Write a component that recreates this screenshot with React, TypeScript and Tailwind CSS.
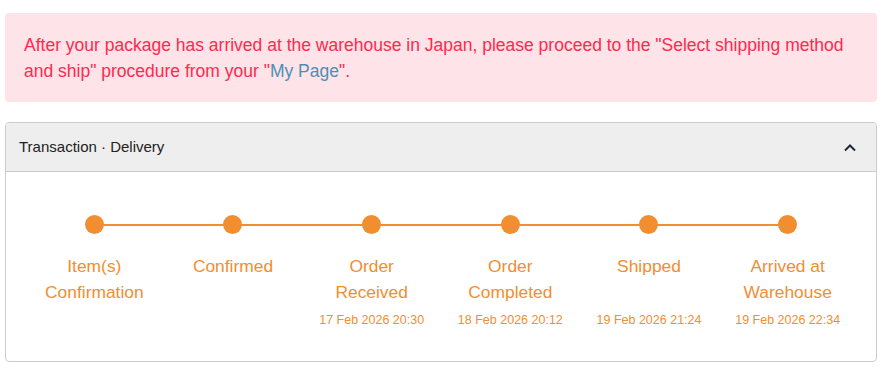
import React from "react";

const steps = [
  { label: ["Item(s)", "Confirmation"], date: "" },
  { label: ["Confirmed"], date: "" },
  { label: ["Order", "Received"], date: "17 Feb 2026 20:30" },
  { label: ["Order", "Completed"], date: "18 Feb 2026 20:12" },
  { label: ["Shipped"], date: "19 Feb 2026 21:24" },
  { label: ["Arrived at", "Warehouse"], date: "19 Feb 2026 22:34" },
];

export default function App() {
  return (
    <div
      className="w-[882px] h-[368px] bg-white px-[5px] pt-[13px]"
      style={{ fontFamily: '"Liberation Sans", Arial, sans-serif' }}
    >
      <div className="bg-[#fee3e8] rounded-[4px] h-[89px] pl-[19px] pr-4 pt-[19px] text-[17.5px] leading-[26px] text-[#fd2a4f]">
        After your package has arrived at the warehouse in Japan, please proceed to the "Select shipping method and ship" procedure from your "
        <span className="text-[#4f8fb6]">My Page</span>".
      </div>

      <div className="mt-[20px] border border-[#cccccc] rounded-[4px] overflow-hidden">
        <div className="h-[49px] bg-[#eeeeee] border-b border-[#cccccc] flex items-center justify-between pl-[13px] pr-[19px]">
          <span className="text-[15px] text-[#222222]">Transaction · Delivery</span>
          <svg width="14" height="10" viewBox="0 0 14 10" className="mt-[2px]">
            <path d="M2 7.5 L7 2.5 L12 7.5" fill="none" stroke="#1f2937" strokeWidth="2" />
          </svg>
        </div>
        <div className="h-[189px] px-[19px] pt-[43px] relative">
          <div className="relative grid grid-cols-6">
            <div className="absolute left-[69px] right-[69px] top-[9px] h-[2px] bg-[#f18e2f]" />
            {steps.map((s, i) => (
              <div key={i} className="flex flex-col items-center text-[#f18e2f] relative">
                <div className="w-[19px] h-[19px] rounded-full bg-[#f18e2f]" />
                <div className="mt-[19px] min-h-[52px] text-[17.4px] leading-[26px] text-center">
                  {s.label.map((l, j) => (
                    <div key={j}>{l}</div>
                  ))}
                </div>
                {s.date && (
                  <div className="text-[12.5px] leading-[16px] mt-[7px] text-center">{s.date}</div>
                )}
              </div>
            ))}
          </div>
        </div>
      </div>
    </div>
  );
}
